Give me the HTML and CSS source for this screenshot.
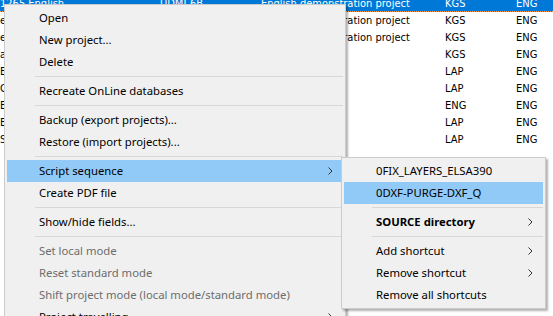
FILE: index.html
```html
<!DOCTYPE html>
<html lang="en">

<head>
    <meta charset="UTF-8">
    <title>Projects</title>
    <link rel="stylesheet" href="styles.css">
</head>

<body>
    <div class="list">
        <div class="row selected">
            <span>1265 English</span><span>UDMI-6B</span><span>English demonstration project</span><span>KGS</span><span>ENG</span>
        </div>
        <div class="row"><span>eng</span><span></span><span>English demonstration project</span><span>KGS</span><span>ENG</span></div>
        <div class="row"><span>eng</span><span></span><span>English demonstration project</span><span>KGS</span><span>ENG</span></div>
        <div class="row"><span>as</span><span></span><span></span><span>KGS</span><span>ENG</span></div>
        <div class="row"><span>Ei</span><span></span><span></span><span>LAP</span><span>ENG</span></div>
        <div class="row"><span>Gi</span><span></span><span></span><span>LAP</span><span>ENG</span></div>
        <div class="row"><span>E</span><span></span><span></span><span>ENG</span><span>ENG</span></div>
        <div class="row"><span>E</span><span></span><span></span><span>LAP</span><span>ENG</span></div>
        <div class="row"><span>S</span><span></span><span></span><span>LAP</span><span>ENG</span></div>
        <div class="row"><span></span><span></span><span></span><span></span><span></span></div>
    </div>

    <!-- context menu -->
    <div class="menu main-menu">
        <div class="item">Open</div>
        <div class="item">New project...</div>
        <div class="item">Delete</div>
        <div class="sep"></div>
        <div class="item">Recreate OnLine databases</div>
        <div class="sep"></div>
        <div class="item">Backup (export projects)...</div>
        <div class="item">Restore (import projects)...</div>
        <div class="sep"></div>
        <div class="item active">Script sequence
            <svg class="arrow" width="5" height="8" viewBox="0 0 5 8"><path d="M0.5 0.5 L4 4 L0.5 7.5" fill="none" stroke="#333" stroke-width="1"/></svg>
        </div>
        <div class="item">Create PDF file</div>
        <div class="sep"></div>
        <div class="item">Show/hide fields...</div>
        <div class="sep"></div>
        <div class="item disabled">Set local mode</div>
        <div class="item disabled">Reset standard mode</div>
        <div class="item disabled">Shift project mode (local mode/standard mode)</div>
        <div class="item">Project travelling
            <svg class="arrow" width="5" height="8" viewBox="0 0 5 8"><path d="M0.5 0.5 L4 4 L0.5 7.5" fill="none" stroke="#333" stroke-width="1"/></svg>
        </div>
    </div>

    <!-- script sequence submenu -->
    <div class="menu sub-menu">
        <div class="item">0FIX_LAYERS_ELSA390</div>
        <div class="item active">0DXF-PURGE-DXF_Q</div>
        <div class="sep"></div>
        <div class="item bold">SOURCE directory
            <svg class="arrow" width="5" height="8" viewBox="0 0 5 8"><path d="M0.5 0.5 L4 4 L0.5 7.5" fill="none" stroke="#333" stroke-width="1"/></svg>
        </div>
        <div class="sep"></div>
        <div class="item">Add shortcut
            <svg class="arrow" width="5" height="8" viewBox="0 0 5 8"><path d="M0.5 0.5 L4 4 L0.5 7.5" fill="none" stroke="#333" stroke-width="1"/></svg>
        </div>
        <div class="item">Remove shortcut
            <svg class="arrow" width="5" height="8" viewBox="0 0 5 8"><path d="M0.5 0.5 L4 4 L0.5 7.5" fill="none" stroke="#333" stroke-width="1"/></svg>
        </div>
        <div class="item">Remove all shortcuts</div>
    </div>
</body>

</html>
```

FILE: styles.css
```css
* {
    margin: 0;
    padding: 0;
    box-sizing: border-box;
}

body {
    width: 553px;
    height: 316px;
    overflow: hidden;
    background-color: white;
    position: relative;
}

.list {
    margin-top: -5px;
    font-family: "DejaVu Sans Condensed", "Liberation Sans", sans-serif;
    font-size: 11px;
    color: black;
}

.row {
    display: grid;
    grid-template-columns: 160px 101px 184px 71px 1fr;
    height: 17px;
    line-height: 17px;
    white-space: nowrap;
}

.row span {
    overflow: hidden;
}

.selected {
    background-color: #0078d7;
    color: white;
    border-bottom: 1px dotted #f5a35a;
}

.menu {
    position: absolute;
    background-color: #f0f0f0;
    border: 1px solid #cccccc;
    padding: 2px;
    box-shadow: 2px 2px 2px rgba(0, 0, 0, 0.3);
    font-family: "Noto Sans", sans-serif;
    font-size: 11.3px;
    color: black;
}

.main-menu {
    left: 4px;
    top: 4px;
    width: 342px;
}

.sub-menu {
    left: 341px;
    top: 157px;
    width: 205px;
}

.item {
    display: flex;
    align-items: center;
    height: 22px;
    padding-left: 32px;
    padding-right: 10px;
    padding-bottom: 1px;
    white-space: nowrap;
}

.item.active {
    background-color: #91c9f7;
}

.item.disabled {
    color: #6d6d6d;
}

.item.bold {
    font-weight: bold;
}

.arrow {
    margin-left: auto;
}

.sep {
    height: 7px;
    margin-left: 28px;
    display: flex;
    align-items: center;
}

.sep::after {
    content: "";
    flex: 1;
    height: 1px;
    background-color: #d7d7d7;
}
```
